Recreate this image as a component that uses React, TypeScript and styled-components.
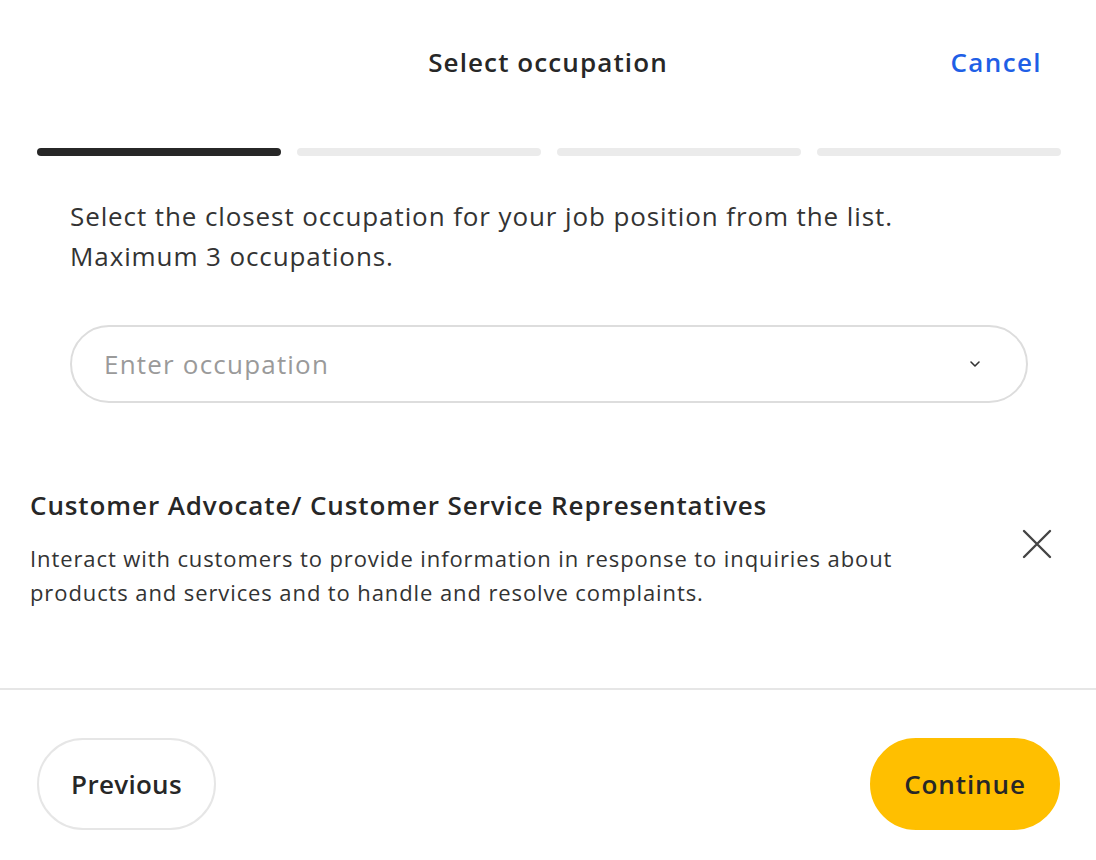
import styled, { createGlobalStyle } from 'styled-components';

const Colors = {
    Ink: '#272727',
    Text: '#333333',
    Muted: '#9a9a9a',
    Line: '#e6e6e6',
    Track: '#ebebeb',
    Blue: '#1f5fe6',
    Yellow: '#ffbf00',
};

const GlobalStyle = createGlobalStyle`
    html, body {
        margin: 0;
        padding: 0;
        background: #fff;
    }
    body {
        font-family: "Open Sans", "Liberation Sans", sans-serif;
        letter-spacing: 0.9px;
        color: ${Colors.Text};
    }
    * {
        box-sizing: border-box;
    }
`;

const Modal = styled.div`
    width: 1096px;
    height: 860px;
    display: flex;
    flex-direction: column;
    background: #fff;
`;

const Header = styled.div`
    display: grid;
    grid-template-columns: 1fr auto 1fr;
    align-items: center;
    height: 124px;
    padding: 0 54px;
`;

const Title = styled.h1`
    grid-column: 2;
    margin: 0;
    font-size: 26px;
    font-weight: 600;
    letter-spacing: 1.1px;
    color: ${Colors.Ink};
`;

const CancelButton = styled.button`
    justify-self: end;
    border: none;
    background: none;
    padding: 0;
    font-family: inherit;
    letter-spacing: 1.4px;
    font-size: 26px;
    font-weight: 600;
    color: ${Colors.Blue};
    cursor: pointer;
`;

const Steps = styled.div`
    display: grid;
    grid-template-columns: repeat(4, 1fr);
    gap: 16px;
    padding: 24px 35px 0 37px;
`;

const Step = styled.div<{ $active?: boolean }>`
    height: 8px;
    border-radius: 4px;
    background: ${p => (p.$active ? Colors.Ink : Colors.Track)};
`;

const Intro = styled.p`
    margin: 40px 0 0;
    padding: 0 70px;
    font-size: 26px;
    line-height: 40px;
    color: ${Colors.Text};
`;

const SelectBox = styled.div`
    margin: 49px 68px 0 70px;
    height: 78px;
    border: 2px solid #dddddd;
    border-radius: 39px;
    display: flex;
    align-items: center;
    justify-content: space-between;
    padding: 0 44px 0 32px;
`;

const Placeholder = styled.span`
    font-size: 26px;
    letter-spacing: 1.2px;
    color: ${Colors.Muted};
`;

const Selected = styled.div`
    margin-top: 85px;
    padding: 0 44px 0 30px;
    display: flex;
    align-items: center;
    justify-content: space-between;
`;

const SelectedText = styled.div`
    display: flex;
    flex-direction: column;
    gap: 19px;
`;

const OccupationName = styled.div`
    font-size: 26px;
    font-weight: 600;
    line-height: 34px;
    color: ${Colors.Ink};
`;

const OccupationInfo = styled.div`
    font-size: 22px;
    line-height: 34px;
    color: ${Colors.Text};
    max-width: 880px;
`;

const RemoveButton = styled.button`
    border: none;
    background: none;
    padding: 0;
    margin-bottom: 10px;
    display: flex;
    cursor: pointer;
`;

const Spacer = styled.div`
    flex: 1;
`;

const Footer = styled.div`
    border-top: 2px solid ${Colors.Line};
    height: 172px;
    padding: 48px 36px 0 37px;
    display: flex;
    justify-content: space-between;
    align-items: flex-start;
`;

const PillButton = styled.button<{ $primary?: boolean }>`
    height: 92px;
    width: ${p => (p.$primary ? '190px' : '179px')};
    border-radius: 46px;
    padding: 0;
    font-family: inherit;
    letter-spacing: ${p => (p.$primary ? '0.9px' : '0.3px')};
    font-size: 26px;
    font-weight: 600;
    color: ${Colors.Ink};
    cursor: pointer;
    border: 2px solid ${p => (p.$primary ? Colors.Yellow : Colors.Line)};
    background: ${p => (p.$primary ? Colors.Yellow : '#fff')};
`;

export default function App() {
    return (
        <>
            <GlobalStyle />
            <Modal>
                <Header>
                    <Title>Select occupation</Title>
                    <CancelButton>Cancel</CancelButton>
                </Header>
                <Steps>
                    <Step $active />
                    <Step />
                    <Step />
                    <Step />
                </Steps>
                <Intro>
                    Select the closest occupation for your job position from the list.
                    <br />
                    Maximum 3 occupations.
                </Intro>
                <SelectBox>
                    <Placeholder>Enter occupation</Placeholder>
                    <svg width="14" height="10" viewBox="0 0 14 10">
                        <path d="M3 3 L7 7 L11 3" fill="none" stroke="#333" strokeWidth="1.6" strokeLinecap="round" strokeLinejoin="round" />
                    </svg>
                </SelectBox>
                <Selected>
                    <SelectedText>
                        <OccupationName>Customer Advocate/ Customer Service Representatives</OccupationName>
                        <OccupationInfo>
                            Interact with customers to provide information in response to inquiries about products and services and to handle and resolve complaints.
                        </OccupationInfo>
                    </SelectedText>
                    <RemoveButton aria-label="Remove">
                        <svg width="30" height="30" viewBox="0 0 30 30">
                            <path d="M2 2 L28 28 M28 2 L2 28" stroke="#444" strokeWidth="2.4" strokeLinecap="round" />
                        </svg>
                    </RemoveButton>
                </Selected>
                <Spacer />
                <Footer>
                    <PillButton>Previous</PillButton>
                    <PillButton $primary>Continue</PillButton>
                </Footer>
            </Modal>
        </>
    );
}
